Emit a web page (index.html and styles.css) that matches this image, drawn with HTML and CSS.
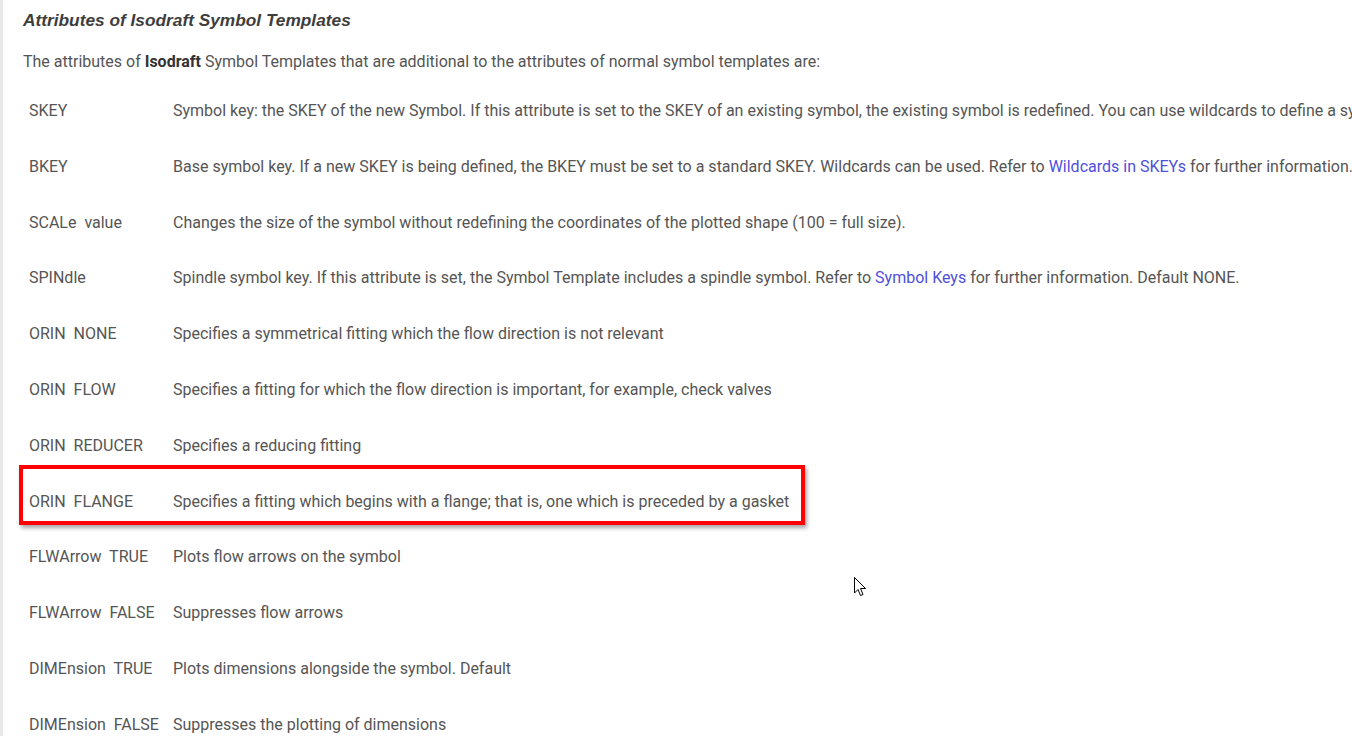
FILE: index.html
```html
<!DOCTYPE html>
<html>
<head>
<meta charset="utf-8">
<link rel="stylesheet" href="styles.css">
</head>
<body>
<div class="page">
  <h3 class="title">Attributes of Isodraft Symbol Templates</h3>
  <p class="intro">The attributes of <b>Isodraft</b> Symbol Templates that are additional to the attributes of normal symbol templates are:</p>
  <div class="attrs">
    <div class="row"><div class="key">SKEY</div><div class="desc">Symbol key: the SKEY of the new Symbol. If this attribute is set to the SKEY of an existing symbol, the existing symbol is redefined. You can use wildcards to define a symbol for a group of SKEYs.</div></div>
    <div class="row"><div class="key">BKEY</div><div class="desc">Base symbol key. If a new SKEY is being defined, the BKEY must be set to a standard SKEY. Wildcards can be used. Refer to <a class="link">Wildcards in SKEYs</a> for further information.</div></div>
    <div class="row"><div class="key">SCALe&nbsp; value</div><div class="desc">Changes the size of the symbol without redefining the coordinates of the plotted shape (100 = full size).</div></div>
    <div class="row"><div class="key">SPINdle</div><div class="desc">Spindle symbol key. If this attribute is set, the Symbol Template includes a spindle symbol. Refer to <a class="link">Symbol Keys</a> for further information. Default NONE.</div></div>
    <div class="row"><div class="key">ORIN&nbsp; NONE</div><div class="desc">Specifies a symmetrical fitting which the flow direction is not relevant</div></div>
    <div class="row"><div class="key">ORIN&nbsp; FLOW</div><div class="desc">Specifies a fitting for which the flow direction is important, for example, check valves</div></div>
    <div class="row"><div class="key">ORIN&nbsp; REDUCER</div><div class="desc">Specifies a reducing fitting</div></div>
    <div class="row highlighted"><div class="key">ORIN&nbsp; FLANGE</div><div class="desc">Specifies a fitting which begins with a flange; that is, one which is preceded by a gasket</div><span class="mark"></span></div>
    <div class="row"><div class="key">FLWArrow&nbsp; TRUE</div><div class="desc">Plots flow arrows on the symbol</div></div>
    <div class="row"><div class="key">FLWArrow&nbsp; FALSE</div><div class="desc">Suppresses flow arrows</div></div>
    <div class="row"><div class="key">DIMEnsion&nbsp; TRUE</div><div class="desc">Plots dimensions alongside the symbol. Default</div></div>
    <div class="row"><div class="key">DIMEnsion&nbsp; FALSE</div><div class="desc">Suppresses the plotting of dimensions</div></div>
  </div>
</div>
<svg class="cursor" width="14" height="22" viewBox="0 0 14 22"><path d="M0.5 0.5 L0.5 16 L4 12.5 L6.5 18.5 L9 17.5 L6.5 11.5 L11.5 11.5 Z" fill="#fff" stroke="#000" stroke-width="1" stroke-linejoin="miter"/></svg>
</body>
</html>
```
FILE: styles.css
```css
html, body {
  margin: 0;
  padding: 0;
  background: #fff;
  overflow: hidden;
  height: 736px;
}
.page {
  position: relative;
  border-left: 3px solid #e8e8e8;
  padding-left: 20px;
  min-height: 680px;
  font-family: Roboto, "Liberation Sans", sans-serif;
  color: #555;
}
.title {
  margin: 0;
  padding-top: 9px;
  height: 22px;
  line-height: 22px;
  font-family: "Liberation Sans", Arial, sans-serif;
  font-size: 17.3px;
  font-weight: bold;
  font-style: italic;
  color: #3d3d3d;
}
.intro {
  margin: 19px 0 0 0;
  font-size: 16px;
  line-height: 24px;
  white-space: nowrap;
}
.intro b { color: #333; }
.attrs {
  margin-top: 9px;
  display: flex;
  flex-direction: column;
}
.row {
  position: relative;
  display: grid;
  grid-template-columns: 150px auto;
  align-items: center;
  height: 55.82px;
  font-size: 16px;
  line-height: 24px;
  white-space: nowrap;
}
.key {
  padding-left: 6px;
}
.link {
  color: #4f4fdc;
  text-decoration: none;
}
.mark {
  position: absolute;
  left: -4px;
  top: -9px;
  width: 778px;
  height: 52px;
  border: 4px solid #f00;
  box-shadow: 2px 3px 4px rgba(0,0,0,0.35);
  pointer-events: none;
}
.cursor {
  position: absolute;
  left: 854px;
  top: 577px;
}
```
